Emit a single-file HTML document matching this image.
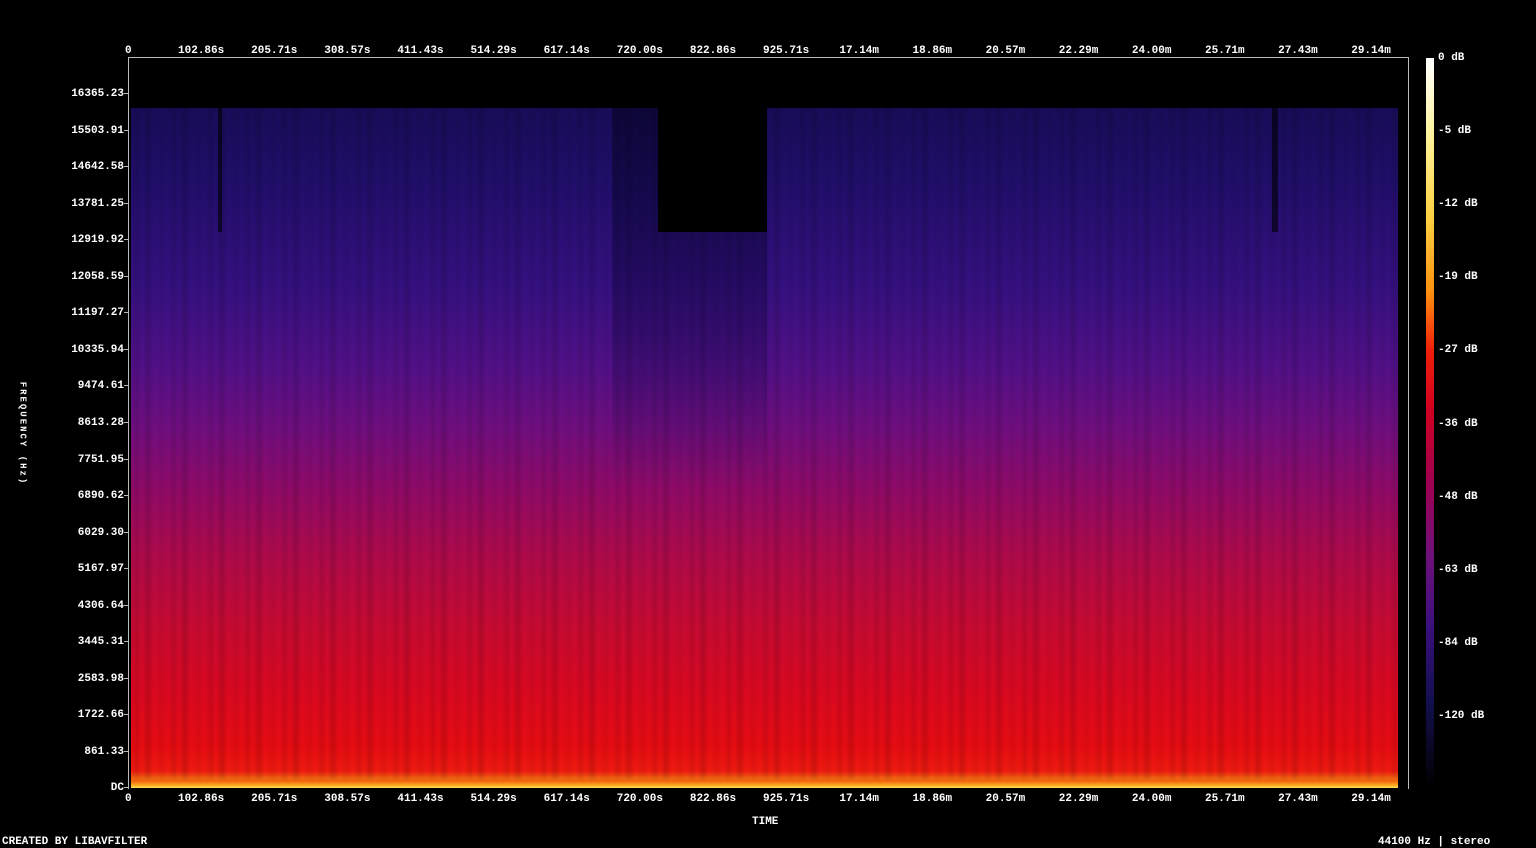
<!DOCTYPE html>
<html><head><style>
body{margin:0;width:1536px;height:847px;background:#000;position:relative;overflow:hidden;font:bold 11px "Liberation Mono",monospace;color:#fff}
.t{position:absolute;white-space:nowrap;line-height:11px}
.ax{position:absolute;left:128px;top:57px;width:1279px;height:731px;border:1px solid #bbb;border-bottom:none;border-right:1px solid #bbb}
.spec{position:absolute;left:131px;top:108px;width:1267px;height:680px;
background:linear-gradient(to bottom,#180c58 0%,#220e6c 12%,#351080 26%,#521088 38%,#700e80 47%,#900a68 56%,#b00a4a 66%,#c80a32 76%,#dc0820 86%,#e80c12 94%,#f01a10 97.5%,#f08010 99%,#ffd030 100%)}
.str{position:absolute;left:131px;top:108px;width:1267px;height:680px;opacity:.4;
background:repeating-linear-gradient(90deg,rgba(0,0,0,0) 0,rgba(0,0,0,.25) 6px,rgba(0,0,0,0) 11px,rgba(0,0,0,.35) 17px,rgba(0,0,0,0) 23px,rgba(0,0,0,.15) 31px,rgba(0,0,0,0) 37px)}
.cb{position:absolute;left:1426px;top:58px;width:8px;height:730px;
background:linear-gradient(to bottom,#fff 0%,#fff4a0 10%,#ffd040 22%,#ff9010 32%,#f02008 40%,#d00020 48%,#a00050 58%,#70107a 68%,#3a1080 78%,#141050 88%,#000 100%)}
</style></head><body>
<div class="spec"></div>
<div class="str"></div>
<div style="position:absolute;left:612px;top:108px;width:155px;height:380px;background:linear-gradient(to bottom,rgba(0,0,20,.45),rgba(0,0,40,.25) 60%,rgba(0,0,0,0))"></div>
<div style="position:absolute;left:658px;top:108px;width:109px;height:124px;background:#000"></div>
<div style="position:absolute;left:218px;top:108px;width:4px;height:124px;background:rgba(0,0,0,.6)"></div>
<div style="position:absolute;left:1272px;top:108px;width:6px;height:124px;background:rgba(0,0,0,.6)"></div>
<div style="position:absolute;left:131px;top:776px;width:1267px;height:12px;background:linear-gradient(to bottom,rgba(240,60,10,0),#f06010 40%,#ffb020 80%,#ffe060)"></div>
<div class="ax"></div>
<div class="cb"></div>
<div id="L"></div>
<script>
var h='';
var yv=["16365.23","15503.91","14642.58","13781.25","12919.92","12058.59","11197.27","10335.94","9474.61","8613.28","7751.95","6890.62","6029.30","5167.97","4306.64","3445.31","2583.98","1722.66","861.33","DC"];
for(var i=0;i<yv.length;i++){var y=93+i*36.55;h+='<div class="t" style="right:'+(1536-124)+'px;top:'+(y-4)+'px">'+yv[i]+'</div><div style="position:absolute;left:124px;top:'+y+'px;width:4px;height:1px;background:#bbb"></div>';}
var xv=["0","102.86s","205.71s","308.57s","411.43s","514.29s","617.14s","720.00s","822.86s","925.71s","17.14m","18.86m","20.57m","22.29m","24.00m","25.71m","27.43m","29.14m"];
for(var i=0;i<xv.length;i++){var x=128+i*73.12;var l=x-(i==0?3:xv[i].length*3.3);h+='<div class="t" style="left:'+l+'px;top:46px">'+xv[i]+'</div><div class="t" style="left:'+l+'px;top:794px">'+xv[i]+'</div>';}
var cv=["0 dB","-5 dB","-12 dB","-19 dB","-27 dB","-36 dB","-48 dB","-63 dB","-84 dB","-120 dB"];
for(var i=0;i<cv.length;i++){h+='<div class="t" style="left:1438px;top:'+(53+i*73.1)+'px">'+cv[i]+'</div>';}
document.getElementById('L').innerHTML=h;
</script>
<div class="t" style="left:752px;top:817px">TIME</div>
<div class="t" style="left:2px;top:837px">CREATED BY LIBAVFILTER</div>
<div class="t" style="left:1378px;top:837px">44100 Hz | stereo</div>
<div class="t" style="left:-30px;top:428px;transform:rotate(90deg);letter-spacing:2px;font-size:9px">FREQUENCY (Hz)</div>
</body></html>
